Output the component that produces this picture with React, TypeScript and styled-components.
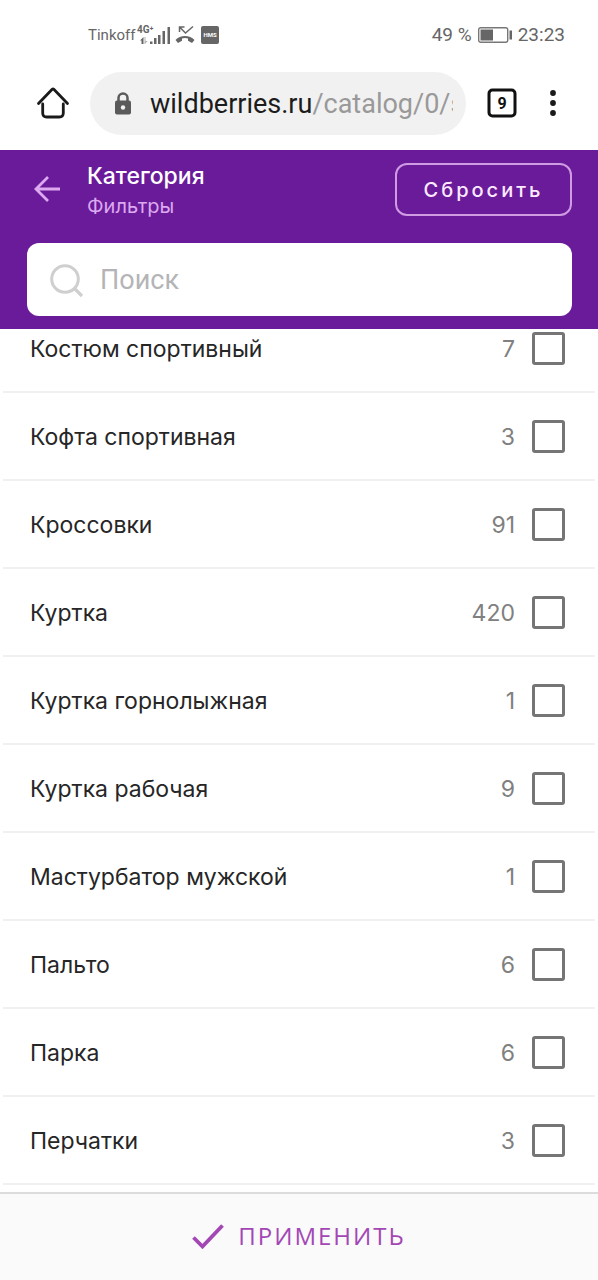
import React from "react";
import styled, { createGlobalStyle } from "styled-components";

const GlobalStyle = createGlobalStyle`
  * { box-sizing: border-box; }
  body { margin: 0; background: #fff; font-family: Inter, "Liberation Sans", sans-serif; }
  button { font: inherit; padding: 0; border: 0; background: none; cursor: pointer; }
`;

const Screen = styled.div`
  display: flex;
  flex-direction: column;
  height: 100vh;
  overflow: hidden;
`;

const StatusBar = styled.div`
  flex: none;
  display: flex;
  align-items: center;
  justify-content: space-between;
  height: 70px;
  padding: 0 33px 0 88px;
  color: #666;
  font: 19px/24px Roboto, sans-serif;
`;

const StatusGroup = styled.div<{ $gap: number }>`
  display: flex;
  align-items: center;
  gap: ${(p) => p.$gap}px;
`;

const Carrier = styled.span`
  font-size: 15px;
`;

const Signal = styled.svg`
  margin-right: 2px;
`;

const BrowserBar = styled.div`
  flex: none;
  display: flex;
  align-items: center;
  height: 80px;
  padding: 0 10px 14px 36px;
`;

const IconButton = styled.button<{ $width: number }>`
  display: flex;
  flex: none;
  align-items: center;
  justify-content: center;
  width: ${(p) => p.$width}px;
  height: 40px;
`;

const Address = styled.div`
  flex: 1;
  min-width: 0;
  display: flex;
  align-items: center;
  gap: 18px;
  height: 63px;
  margin: 0 20px 0 20px;
  padding: 2px 13px 0 24px;
  border-radius: 32px;
  background: #f1f1f1;
`;

const Url = styled.span`
  flex: 1;
  min-width: 0;
  overflow: hidden;
  white-space: nowrap;
  color: #1c1c1c;
  font: 27px/36px Roboto, sans-serif;
`;

const UrlPath = styled.span`
  color: #999;
`;

const Header = styled.header`
  flex: none;
  position: relative;
  padding: 13px 26px 13px 27px;
  background: #6a1b9a;
`;

const TitleRow = styled.div`
  display: flex;
  align-items: flex-start;
  height: 80px;
`;

const BackButton = styled(IconButton)`
  height: 52px;
`;

const Titles = styled.div`
  flex: 1;
  margin-left: 20px;
`;

const Title = styled.h1`
  margin: 0;
  color: #fff;
  font-size: 23px;
  font-weight: 500;
  line-height: 26px;
`;

const Subtitle = styled.p`
  margin: 4px 0 0;
  color: #dda9f0;
  font-size: 20px;
  line-height: 26px;
`;

const ResetButton = styled.button`
  && {
    width: 177px;
    height: 53px;
    border: 2px solid #cf9be3;
    border-radius: 12px;
    color: #fdeaff;
    font-size: 20px;
    font-weight: 500;
    letter-spacing: 3px;
  }
`;

const SearchBox = styled.label`
  display: flex;
  align-items: center;
  gap: 16px;
  height: 73px;
  padding: 0 22px 0 21px;
  border-radius: 12px;
  background: #fff;
`;

const SearchInput = styled.input`
  flex: 1;
  min-width: 0;
  padding: 0;
  border: 0;
  outline: 0;
  color: #222;
  font: 27px/36px Roboto, sans-serif;
  &::placeholder { color: #b4b4b7; opacity: 1; }
`;

const ListArea = styled.main`
  flex: 1;
  min-height: 0;
  overflow: hidden auto;
`;

const List = styled.ul`
  margin: -24px 3px 0;
  padding: 0;
  list-style: none;
`;

const Row = styled.li`
  height: 88px;
  border-bottom: 2px solid #f0f0f0;
`;

const RowLabel = styled.label`
  display: flex;
  align-items: center;
  height: 100%;
  padding: 1px 30px 0 27px;
  color: #262626;
  font-size: 23px;
  line-height: 28px;
`;

const Name = styled.span`
  flex: 1;
`;

const Count = styled.span`
  margin-right: 17px;
  color: #808080;
`;

const Checkbox = styled.input`
  appearance: none;
  width: 33px;
  height: 33px;
  margin: 0;
  border: 3px solid #757575;
  border-radius: 3px;
  background: #fff;
  &:checked { background: #6a1b9a; }
`;

const Footer = styled.footer`
  flex: none;
  display: flex;
  height: 88px;
  border-top: 2px solid #dcdcdc;
  background: #fafafa;
`;

const ApplyButton = styled.button`
  && {
    flex: 1;
    display: flex;
    align-items: center;
    justify-content: center;
    gap: 14px;
    padding-bottom: 2px;
    color: #a347b5;
    font-family: "Open Sans", sans-serif;
    font-size: 24px;
    font-weight: 500;
    line-height: 32px;
    letter-spacing: 2px;
  }
`;

const items: [string, number][] = [
  ["Костюм спортивный", 7],
  ["Кофта спортивная", 3],
  ["Кроссовки", 91],
  ["Куртка", 420],
  ["Куртка горнолыжная", 1],
  ["Куртка рабочая", 9],
  ["Мастурбатор мужской", 1],
  ["Пальто", 6],
  ["Парка", 6],
  ["Перчатки", 3],
];

export default function App() {
  return (
    <Screen>
      <GlobalStyle />
      <StatusBar>
        <StatusGroup $gap={2}>
          <Carrier>Tinkoff</Carrier>
          <Signal width="34" height="22" viewBox="0 0 34 22" fill="#666">
            <text x="0" y="9" fontSize="10" fontWeight="700" fontFamily="Roboto, sans-serif">4G⁺</text>
            <path d="M3 16.500l3.500-3.500v7H4.500v-3.500z" />
            <path d="M7.500 13h1v4h2l-2.500 3h-.5z" opacity="0.5" />
            <path d="M13 17.500h2.500V20H13zM17 14h2.500v6H17zM21 11h2.500v9H21zM25.500 7H28v13h-2.500zM30.500 3H33v17h-2.500z" />
          </Signal>
          <svg width="20" height="20" viewBox="0 0 20 20" fill="none" stroke="#666" strokeWidth="1.500">
            <path d="M4.500 7V2h5M4.500 2l6 6L18 1.500" />
            <path d="M.5 15C5 9.500 15 9.500 19.500 15L17 18l-4-2.200v-2.300c-2-.7-4-.7-6 0v2.300L3 18z" fill="#666" stroke="none" />
          </svg>
          <svg width="22" height="18" viewBox="0 0 22 18">
            <rect x="4" y="0" width="18" height="18" rx="2" fill="#666" />
            <text x="13" y="11" textAnchor="middle" fontSize="6" fontWeight="700" fontFamily="Roboto, sans-serif" fill="#fff">HMS</text>
          </svg>
        </StatusGroup>
        <StatusGroup $gap={6}>
          <span>49 %</span>
          <svg width="34" height="16" viewBox="0 0 34 16">
            <rect x="0.700" y="0.700" width="29" height="14.600" rx="2" fill="#fff" stroke="#777" strokeWidth="1.400" />
            <path d="M2.500 2.500H15v11H2.500zM31.500 3.500h2.500v9h-2.500z" fill="#666" />
          </svg>
          <span>23:23</span>
        </StatusGroup>
      </StatusBar>

      <BrowserBar>
        <IconButton $width={34} aria-label="Домой">
          <svg width="34" height="32" viewBox="0 0 34 32" fill="none" stroke="#1a1a1a" strokeWidth="2.800" strokeLinecap="round" strokeLinejoin="round">
            <path d="M2.500 16.500L16.200 2.300Q17 1.500 17.800 2.300L31.500 16.500" />
            <path d="M6.700 17v9q0 4 4 4h12.600q4 0 4-4v-9" />
          </svg>
        </IconButton>
        <Address>
          <svg width="18" height="24" viewBox="0 0 18 24">
            <path d="M4.500 10V6a4.500 4.500 0 0 1 9 0v4" fill="none" stroke="#5a5a5a" strokeWidth="2.500" />
            <rect x="1" y="8.500" width="16" height="14" rx="2" fill="#5a5a5a" />
            <circle cx="9" cy="15.500" r="2.200" fill="#f1f1f1" />
          </svg>
          <Url>wildberries.ru<UrlPath>/catalog/0/s</UrlPath></Url>
        </Address>
        <IconButton $width={32} aria-label="Вкладки">
          <svg width="30" height="30" viewBox="0 0 30 30">
            <rect x="2" y="2" width="26" height="26" rx="3.500" fill="#fff" stroke="#111" strokeWidth="3" />
            <text x="15" y="21" textAnchor="middle" fontSize="16" fontWeight="700" fontFamily="Roboto, sans-serif" fill="#111">9</text>
          </svg>
        </IconButton>
        <IconButton $width={70} aria-label="Меню">
          <svg width="8" height="28" viewBox="0 0 8 28" fill="#1a1a1a">
            <circle cx="4" cy="4" r="2.900" />
            <circle cx="4" cy="14" r="2.900" />
            <circle cx="4" cy="24" r="2.900" />
          </svg>
        </IconButton>
      </BrowserBar>

      <Header>
        <TitleRow>
          <BackButton $width={40} aria-label="Назад">
            <svg width="28" height="28" viewBox="0 0 28 28" fill="none" stroke="#dda9f0" strokeWidth="2.800">
              <path d="M27 14H3M15 2L3 14l12 12" />
            </svg>
          </BackButton>
          <Titles>
            <Title>Категория</Title>
            <Subtitle>Фильтры</Subtitle>
          </Titles>
          <ResetButton>Сбросить</ResetButton>
        </TitleRow>
        <SearchBox>
          <svg width="36" height="36" viewBox="0 0 36 36" fill="none" stroke="#cfcfd0" strokeWidth="3">
            <circle cx="17" cy="17" r="13.300" />
            <path d="M26 26l8 8" strokeWidth="3.200" />
          </svg>
          <SearchInput type="text" placeholder="Поиск" aria-label="Поиск" />
        </SearchBox>
      </Header>

      <ListArea>
        <List>
          {items.map(([name, count]) => (
            <Row key={name}>
              <RowLabel>
                <Name>{name}</Name>
                <Count>{count}</Count>
                <Checkbox type="checkbox" />
              </RowLabel>
            </Row>
          ))}
        </List>
      </ListArea>

      <Footer>
        <ApplyButton>
          <svg width="32" height="26" viewBox="0 0 32 26" fill="none" stroke="#a347b5" strokeWidth="3.800">
            <path d="M1.500 14.500l9 9L30.500 2.500" />
          </svg>
          ПРИМЕНИТЬ
        </ApplyButton>
      </Footer>
    </Screen>
  );
}
